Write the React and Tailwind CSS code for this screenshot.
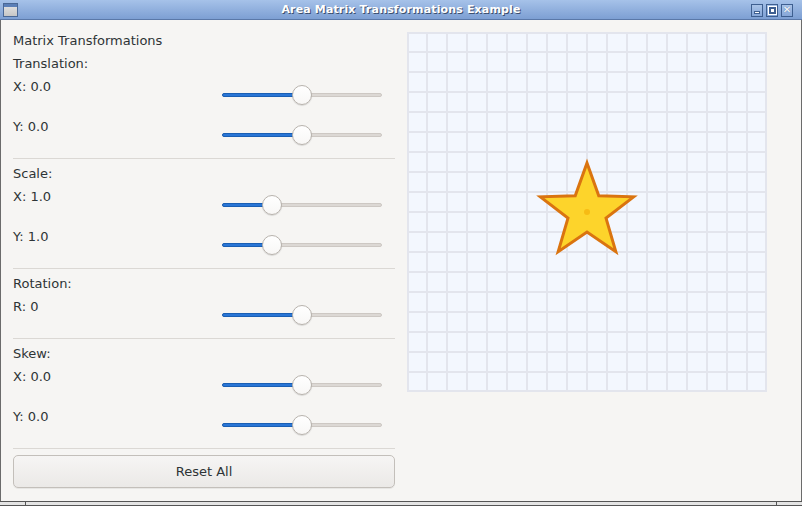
import React from 'react';

const SECTIONS = [
    { title: 'Translation:', rows: [{ label: 'X: 0.0', pos: 80 }, { label: 'Y: 0.0', pos: 80 }] },
    { title: 'Scale:', rows: [{ label: 'X: 1.0', pos: 50 }, { label: 'Y: 1.0', pos: 50 }] },
    { title: 'Rotation:', rows: [{ label: 'R: 0', pos: 80 }] },
    { title: 'Skew:', rows: [{ label: 'X: 0.0', pos: 80 }, { label: 'Y: 0.0', pos: 80 }] }
];

// star points around the canvas centre
const STAR = (() => {
    const pts = [];
    for (let i = 0; i < 10; i++) {
        const a = (i * 36 * Math.PI) / 180;
        const r = i % 2 === 0 ? 49 : 20;
        pts.push(`${(180 + r * Math.sin(a)).toFixed(2)},${(180 - r * Math.cos(a)).toFixed(2)}`);
    }
    return pts.join(' ');
})();

function Slider({ pos }) {
    return (
        <div className="relative w-[160px] h-[20px]">
            <div className="absolute left-0 right-0 top-[8px] h-[4px] rounded-full bg-[#dcd8d4] border border-[#cdc8c3]" />
            <div
                className="absolute left-0 top-[8px] h-[4px] rounded-full bg-[#2a76d6] border border-[#1a5fb4]"
                style={{ width: pos }}
            />
            <div
                className="absolute top-0 w-[20px] h-[20px] rounded-full bg-gradient-to-b from-white to-[#f8f7f6] border border-[#b8b3ad] shadow-[0_1px_1px_rgba(0,0,0,0.12)]"
                style={{ left: pos - 10 }}
            />
        </div>
    );
}

function TitleButton({ children }) {
    return (
        <div className="w-[12px] h-[13px] border border-[#3e5f90] bg-gradient-to-b from-[#a9c3e8] to-[#86a7d8] flex items-center justify-center">
            {children}
        </div>
    );
}

function Grid() {
    const lines = [];
    for (let i = 0; i <= 18; i++) {
        const p = i === 0 ? 1 : i === 18 ? 359 : i * 20;
        lines.push(<line key={'v' + i} x1={p} y1={0} x2={p} y2={360} />);
        lines.push(<line key={'h' + i} x1={0} y1={p} x2={360} y2={p} />);
    }
    return (
        <svg width="360" height="360" viewBox="0 0 360 360" className="block">
            <rect x="0" y="0" width="360" height="360" fill="#f3f7fe" />
            <g stroke="#e3e5ed" strokeWidth="2">{lines}</g>
            <polygon points={STAR} fill="#fdd42b" stroke="#da7410" strokeWidth="3" strokeLinejoin="miter" />
            <circle cx="180" cy="180" r="3" fill="#f7bb14" />
        </svg>
    );
}

export default function App() {
    return (
        <div className="w-[802px] h-[506px] flex flex-col overflow-hidden bg-[#f6f5f3] font-['DejaVu_Sans',sans-serif] text-[13px] text-[#2e3436]">
            {/* Title bar */}
            <div className="h-[20px] grid grid-cols-[60px_1fr_60px] items-center border-b border-[#5a78a8] bg-gradient-to-b from-[#a6c2e9] to-[#7d9fd3] px-[3px]">
                <div className="w-[15px] h-[14px] border border-[#4a6896] bg-gradient-to-b from-[#e6e6e6] to-[#c6c6c6] flex flex-col">
                    <div className="h-[3px] bg-[#5b7fb7]" />
                </div>
                <div className="text-center text-white font-bold text-[11px] tracking-[0.15px] leading-[20px] [text-shadow:1px_1px_0_#3c4f6e]">
                    Area Matrix Transformations Example
                </div>
                <div className="flex justify-end gap-[3px] mr-[6px]">
                    <TitleButton>
                        <div className="w-[6px] h-[3px] bg-white border border-[#3e5f90] mt-[5px]" />
                    </TitleButton>
                    <TitleButton>
                        <div className="w-[7px] h-[7px] bg-white border-2 border-[#3e5f90] outline outline-1 outline-white" />
                    </TitleButton>
                    <TitleButton>
                        <span className="text-white font-bold text-[10px] leading-none [text-shadow:0_0_1px_#3e5f90]">✕</span>
                    </TitleButton>
                </div>
            </div>

            {/* Content */}
            <div className="flex-1 flex border-l border-r border-[#6b6b6b]">
                <div className="w-[382px] ml-[12px] pt-[10px] flex flex-col">
                    <div className="h-[20px] pt-[1px] leading-[20px]">Matrix Transformations</div>
                    {SECTIONS.map((s, i) => (
                        <div key={s.title} className="flex flex-col">
                            {i > 0 && <div className="h-px bg-[#dbd8d4] mt-[2px] mb-[4px]" />}
                            <div className={`h-[20px] pt-[1px] leading-[20px] ${i === 0 ? 'mt-[3px]' : ''}`}>{s.title}</div>
                            <div className="mt-[3px]">
                                {s.rows.map((r) => (
                                    <div key={r.label} className="flex h-[40px] items-start">
                                        <span className="pt-[1px] leading-[20px]">{r.label}</span>
                                        <div className="ml-auto mr-[13px] mt-[9px]">
                                            <Slider pos={r.pos} />
                                        </div>
                                    </div>
                                ))}
                            </div>
                        </div>
                    ))}
                    <div className="h-px bg-[#dbd8d4] mt-[2px]" />
                    <button className="mt-[6px] h-[33px] rounded-[5px] border border-[#c3bfba] bg-gradient-to-b from-[#f6f5f4] to-[#ebe9e7] shadow-[0_1px_0_rgba(0,0,0,0.06)] text-[13px] text-[#2e3436]">
                        Reset All
                    </button>
                </div>
                <div className="ml-[12px] mt-[12px]">
                    <Grid />
                </div>
            </div>

            {/* Bottom frame */}
            <div className="h-[5px] flex border-t border-b border-[#555] bg-[#e4e4e4]">
                <div className="w-[26px] border-r border-[#555]" />
                <div className="flex-1" />
                <div className="w-[26px] border-l border-[#555]" />
            </div>
        </div>
    );
}
